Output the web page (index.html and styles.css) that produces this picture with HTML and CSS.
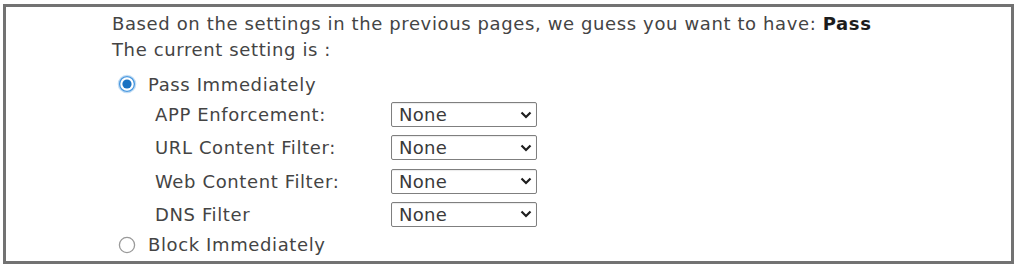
FILE: index.html
```html
<!DOCTYPE html>
<html>
<head>
<meta charset="utf-8">
<link rel="stylesheet" href="styles.css">
</head>
<body>
<div class="frame">
  <div class="content">
    <p class="line">Based on the settings in the previous pages, we guess you want to have: <b>Pass</b></p>
    <p class="line">The current setting is :</p>
    <div class="opt first">
      <svg class="radio" viewBox="0 0 20 20" width="20" height="20">
        <circle cx="10" cy="10" r="8.6" fill="#ffffff" stroke="#c4def5" stroke-width="1.4"/>
        <circle cx="10" cy="10" r="7.4" fill="#ffffff" stroke="#4c9ae0" stroke-width="1.4"/>
        <circle cx="10" cy="10" r="4.6" fill="#1a72c2"/>
      </svg>
      <span>Pass Immediately</span>
    </div>
    <div class="grid">
      <span class="lbl">APP Enforcement:</span>
      <span class="sel"><span>None</span><svg viewBox="0 0 12 8" width="12" height="8"><path d="M1.5 1.5 L6 6 L10.5 1.5" fill="none" stroke="#1e1e1e" stroke-width="2.2"/></svg></span>
      <span class="lbl">URL Content Filter:</span>
      <span class="sel"><span>None</span><svg viewBox="0 0 12 8" width="12" height="8"><path d="M1.5 1.5 L6 6 L10.5 1.5" fill="none" stroke="#1e1e1e" stroke-width="2.2"/></svg></span>
      <span class="lbl">Web Content Filter:</span>
      <span class="sel"><span>None</span><svg viewBox="0 0 12 8" width="12" height="8"><path d="M1.5 1.5 L6 6 L10.5 1.5" fill="none" stroke="#1e1e1e" stroke-width="2.2"/></svg></span>
      <span class="lbl">DNS Filter</span>
      <span class="sel"><span>None</span><svg viewBox="0 0 12 8" width="12" height="8"><path d="M1.5 1.5 L6 6 L10.5 1.5" fill="none" stroke="#1e1e1e" stroke-width="2.2"/></svg></span>
    </div>
    <div class="opt last">
      <svg class="radio" viewBox="0 0 20 20" width="20" height="20">
        <circle cx="10" cy="10" r="7.6" fill="#ffffff" stroke="#9a9a9a" stroke-width="1.3"/>
      </svg>
      <span>Block Immediately</span>
    </div>
  </div>
</div>
</body>
</html>
```
FILE: styles.css
```css
html, body {
  margin: 0;
  padding: 0;
  background: #fff;
}
body {
  padding: 4px 1px 0 3px;
  font-family: "DejaVu Sans", Verdana, sans-serif;
  font-size: 18px;
  letter-spacing: 0.62px;
  color: #444444;
}
.frame {
  border: 3px solid #727272;
  height: 260px;
  width: 1011px;
  box-sizing: border-box;
  overflow: hidden;
}
.content {
  padding: 4px 0 0 106px;
}
.line {
  margin: 0;
  height: 26px;
  line-height: 26px;
  white-space: nowrap;
}
.line b {
  color: #1c1c1c;
}
.opt {
  display: flex;
  align-items: center;
  gap: 11px;
  height: 26px;
  padding-left: 5px;
}
.opt.first {
  margin-top: 8px;
}
.opt.last {
  margin-top: 5px;
}
.radio {
  flex: none;
  display: block;
}
.grid {
  display: grid;
  grid-template-columns: 236px 146px;
  row-gap: 8.3px;
  padding-left: 43px;
  margin-top: 5px;
  align-items: center;
}
.lbl {
  white-space: nowrap;
}
.sel {
  display: flex;
  align-items: center;
  justify-content: space-between;
  height: 25px;
  box-sizing: border-box;
  border: 1px solid #7f7f7f;
  border-radius: 2px;
  box-shadow: inset 0 1px 1px rgba(0,0,0,0.08);
  padding: 0 4px 0 7px;
  letter-spacing: 0.3px;
  color: #3a3a3a;
}
.sel svg {
  display: block;
}
```
